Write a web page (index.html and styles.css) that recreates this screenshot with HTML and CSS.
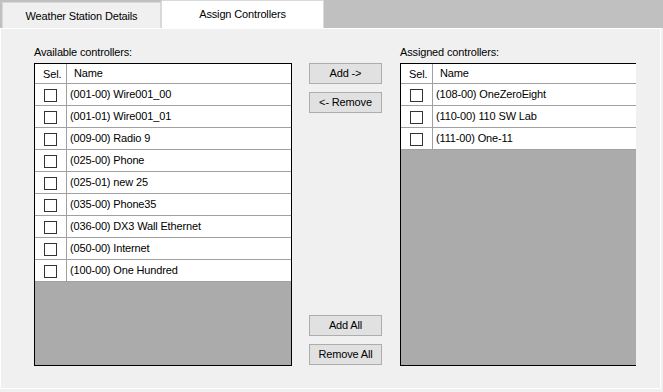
FILE: index.html
```html
<!DOCTYPE html>
<html>
<head>
<meta charset="utf-8">
<link rel="stylesheet" href="styles.css">
</head>
<body>
<div class="window">
  <div class="tabstrip">
    <div class="tab">Weather Station Details</div>
    <div class="tab active">Assign Controllers</div>
  </div>
  <div class="panel">
    <div class="group left">
      <div class="label">Available controllers:</div>
      <div class="table">
        <div class="row head"><div class="sel">Sel.</div><div class="name">Name</div></div>
        <div class="row"><div class="sel"><span class="chk"></span></div><div class="name">(001-00) Wire001_00</div></div>
        <div class="row"><div class="sel"><span class="chk"></span></div><div class="name">(001-01) Wire001_01</div></div>
        <div class="row"><div class="sel"><span class="chk"></span></div><div class="name">(009-00) Radio 9</div></div>
        <div class="row"><div class="sel"><span class="chk"></span></div><div class="name">(025-00) Phone</div></div>
        <div class="row"><div class="sel"><span class="chk"></span></div><div class="name">(025-01) new 25</div></div>
        <div class="row"><div class="sel"><span class="chk"></span></div><div class="name">(035-00) Phone35</div></div>
        <div class="row"><div class="sel"><span class="chk"></span></div><div class="name">(036-00) DX3 Wall Ethernet</div></div>
        <div class="row"><div class="sel"><span class="chk"></span></div><div class="name">(050-00) Internet</div></div>
        <div class="row"><div class="sel"><span class="chk"></span></div><div class="name">(100-00) One Hundred</div></div>
        <div class="empty e-left"></div>
      </div>
    </div>
    <div class="buttons">
      <button class="btn">Add -&gt;</button>
      <button class="btn">&lt;- Remove</button>
      <div class="spacer"></div>
      <button class="btn">Add All</button>
      <button class="btn">Remove All</button>
    </div>
    <div class="group right">
      <div class="label">Assigned controllers:</div>
      <div class="table open">
        <div class="row head"><div class="sel">Sel.</div><div class="name">Name</div></div>
        <div class="row"><div class="sel"><span class="chk"></span></div><div class="name">(108-00) OneZeroEight</div></div>
        <div class="row"><div class="sel"><span class="chk"></span></div><div class="name">(110-00) 110 SW Lab</div></div>
        <div class="row"><div class="sel"><span class="chk"></span></div><div class="name">(111-00) One-11</div></div>
        <div class="empty e-right"></div>
      </div>
    </div>
  </div>
</div>
</body>
</html>
```

FILE: styles.css
```css
* { box-sizing: border-box; }
html, body { margin: 0; padding: 0; }
body {
  background: #f0f0f0;
  font-family: "Liberation Sans", Arial, sans-serif;
  font-size: 11px;
  letter-spacing: -0.15px;
  color: #000;
}
.window {
  width: 663px;
  height: 392px;
  background: #f0f0f0;
  overflow: hidden;
}
.tabstrip {
  height: 28px;
  background: #c0c0c0;
  display: flex;
  align-items: flex-start;
  padding-left: 2px;
}
.tab {
  width: 159px;
  height: 26px;
  margin-top: 2px;
  background: #f0f0f0;
  border: 1px solid #d9d9d9;
  border-bottom: none;
  display: flex;
  align-items: center;
  justify-content: center;
  padding-top: 1px;
  line-height: 13px;
}
.tab.active {
  width: 163px;
  height: 28px;
  margin-top: 0;
  background: #fff;
  padding-top: 0;
  padding-bottom: 1px;
}
.panel {
  width: 661px;
  height: 361px;
  background: #f0f0f0;
  border: 1px solid #fff;
  padding: 17px 0 0 33px;
  display: flex;
  align-items: flex-start;
}
.group.left { width: 258px; }
.group.right { width: 236px; margin-left: 18px; }
.label {
  height: 13px;
  line-height: 13px;
  margin-bottom: 4px;
}
.table {
  border: 1px solid #000;
  background: #fff;
}
.table.open { border-right: none; }
.empty { background: #ababab; }
.e-left { height: 83px; }
.e-right { height: 215px; }
.row {
  display: flex;
  height: 22px;
  background: #fff;
  border-bottom: 1px solid #a0a0a0;
}
.row.head { height: 20px; }
.sel {
  width: 32px;
  flex: none;
  border-right: 1px solid #a0a0a0;
  display: flex;
  align-items: center;
  padding-left: 9px;
}
.head .sel { padding-left: 8px; }
.name {
  flex: 1;
  display: flex;
  align-items: center;
  padding-left: 3px;
  white-space: nowrap;
  line-height: 13px;
}
.head .name { padding-left: 7px; }
.chk {
  width: 13px;
  height: 13px;
  border: 1px solid #333;
  background: #fff;
  margin-top: 1px;
}
.buttons {
  width: 73px;
  height: 320px;
  margin-left: 17px;
  display: flex;
  flex-direction: column;
  padding-top: 17px;
  padding-bottom: 1px;
}
.spacer { flex: 1; }
.btn {
  flex: none;
  width: 73px;
  height: 21px;
  margin: 0 0 8px 0;
  padding: 0;
  background: #e1e1e1;
  border: 1px solid #adadad;
  font-family: "Liberation Sans", Arial, sans-serif;
  font-size: 11px;
  letter-spacing: -0.15px;
  color: #000;
  line-height: 13px;
}
.btn:last-child { margin-bottom: 0; }
```
